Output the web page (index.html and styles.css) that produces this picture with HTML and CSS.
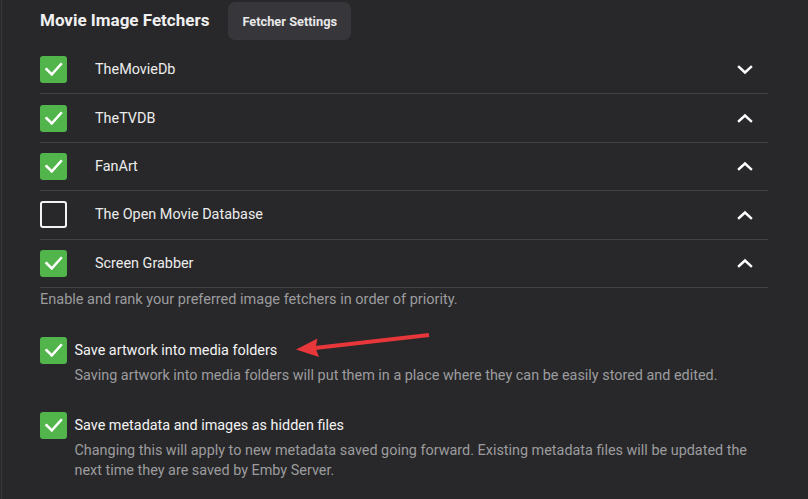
FILE: index.html
```html
<!DOCTYPE html>
<html>
<head>
<meta charset="utf-8">
<link rel="stylesheet" href="styles.css">
</head>
<body>
<div class="page">
  <div class="header">
    <h2 class="title">Movie Image Fetchers</h2>
    <button class="btn">Fetcher Settings</button>
  </div>
  <div class="list">
    <div class="row">
      <span class="cb on"><svg viewBox="0 0 27 27"><path d="M6.5 13.2 L11.8 18.4 L21 8.2"/></svg></span>
      <span class="rlabel">TheMovieDb</span>
      <svg class="chev" viewBox="0 0 16 10"><path d="M2 2 L8 7.5 L14 2"/></svg>
    </div>
    <div class="row">
      <span class="cb on"><svg viewBox="0 0 27 27"><path d="M6.5 13.2 L11.8 18.4 L21 8.2"/></svg></span>
      <span class="rlabel">TheTVDB</span>
      <svg class="chev" viewBox="0 0 16 10"><path d="M2 8 L8 2.5 L14 8"/></svg>
    </div>
    <div class="row">
      <span class="cb on"><svg viewBox="0 0 27 27"><path d="M6.5 13.2 L11.8 18.4 L21 8.2"/></svg></span>
      <span class="rlabel">FanArt</span>
      <svg class="chev" viewBox="0 0 16 10"><path d="M2 8 L8 2.5 L14 8"/></svg>
    </div>
    <div class="row">
      <span class="cb off"></span>
      <span class="rlabel">The Open Movie Database</span>
      <svg class="chev" viewBox="0 0 16 10"><path d="M2 8 L8 2.5 L14 8"/></svg>
    </div>
    <div class="row">
      <span class="cb on"><svg viewBox="0 0 27 27"><path d="M6.5 13.2 L11.8 18.4 L21 8.2"/></svg></span>
      <span class="rlabel">Screen Grabber</span>
      <svg class="chev" viewBox="0 0 16 10"><path d="M2 8 L8 2.5 L14 8"/></svg>
    </div>
  </div>
  <p class="help">Enable and rank your preferred image fetchers in order of priority.</p>

  <div class="option opt1">
    <span class="cb on"><svg viewBox="0 0 27 27"><path d="M6.5 13.2 L11.8 18.4 L21 8.2"/></svg></span>
    <div class="otext">
      <div class="olabel">Save artwork into media folders</div>
      <div class="odesc">Saving artwork into media folders will put them in a place where they can be easily stored and edited.</div>
    </div>
  </div>
  <div class="option opt2">
    <span class="cb on"><svg viewBox="0 0 27 27"><path d="M6.5 13.2 L11.8 18.4 L21 8.2"/></svg></span>
    <div class="otext">
      <div class="olabel">Save metadata and images as hidden files</div>
      <div class="odesc">Changing this will apply to new metadata saved going forward. Existing metadata files will be updated the next time they are saved by Emby Server.</div>
    </div>
  </div>

  <svg class="arrow" viewBox="0 0 140 24" width="140" height="24">
    <path class="shaft" d="M134 5 L20 18"/>
    <path class="head" d="M1 19.5 L22.5 8.5 L20.5 18 L24 27 Z"/>
  </svg>
</div>
</body>
</html>
```

FILE: styles.css
```css
html, body {
  margin: 0;
  padding: 0;
  background: #28282a;
}
body {
  font-family: Roboto, "Noto Sans", sans-serif;
  color: #ececec;
  overflow: hidden;
  height: 499px;
}
.page {
  position: relative;
  margin-left: 1px;
  border-left: 1px solid #38383b;
  padding: 2px 40px 0 38px;
  min-height: 497px;
}
.header {
  display: flex;
  align-items: center;
  height: 38px;
}
.title {
  margin: 0 0 2px 0;
  font-size: 17px;
  font-weight: 700;
  color: #f0f0f0;
}
.btn {
  margin-left: 19px;
  height: 38px;
  padding: 0 14px;
  border: none;
  border-radius: 7px;
  background: #37373b;
  color: #e8e8e8;
  font-family: Roboto, "Noto Sans", sans-serif;
  font-size: 12.8px;
  font-weight: 700;
}
.list {
  margin-top: 6px;
}
.row {
  display: flex;
  align-items: center;
  height: 47.4px;
  border-bottom: 1px solid #434346;
}
.cb {
  width: 27px;
  height: 27px;
  box-sizing: border-box;
  border-radius: 3px;
  flex: none;
  display: block;
}
.cb.on {
  background: #52b54b;
}
.cb.off {
  border: 2px solid #f2f2f2;
}
.cb svg {
  display: block;
  width: 27px;
  height: 27px;
  fill: none;
  stroke: #fff;
  stroke-width: 2.5;
  stroke-linecap: square;
}
.rlabel {
  margin-left: 28px;
  font-size: 14.4px;
  color: #ececec;
}
.chev {
  margin-left: auto;
  margin-right: 15px;
  width: 16px;
  height: 10px;
  fill: none;
  stroke: #fff;
  stroke-width: 2.4;
  stroke-linecap: square;
}
.help {
  margin: 2.5px 0 0 0;
  font-size: 14.5px;
  line-height: 20px;
  color: #9c9c9e;
}
.option {
  display: flex;
  align-items: flex-start;
}
.opt1 {
  margin-top: 27px;
}
.opt2 {
  margin-top: 24.5px;
}
.option .cb {
  width: 26.5px;
  height: 27px;
}
.otext {
  margin-left: 8px;
}
.olabel {
  font-size: 14.4px;
  font-weight: 400;
  line-height: 27px;
  color: #f4f4f4;
}
.odesc {
  margin-top: 2px;
  font-size: 14.4px;
  line-height: 20.7px;
  color: #9c9c9e;
}
.arrow {
  position: absolute;
  left: 293px;
  top: 330px;
  overflow: visible;
}
.arrow .shaft {
  fill: none;
  stroke: #e8373a;
  stroke-width: 4;
}
.arrow .head {
  fill: #e8373a;
}
```
